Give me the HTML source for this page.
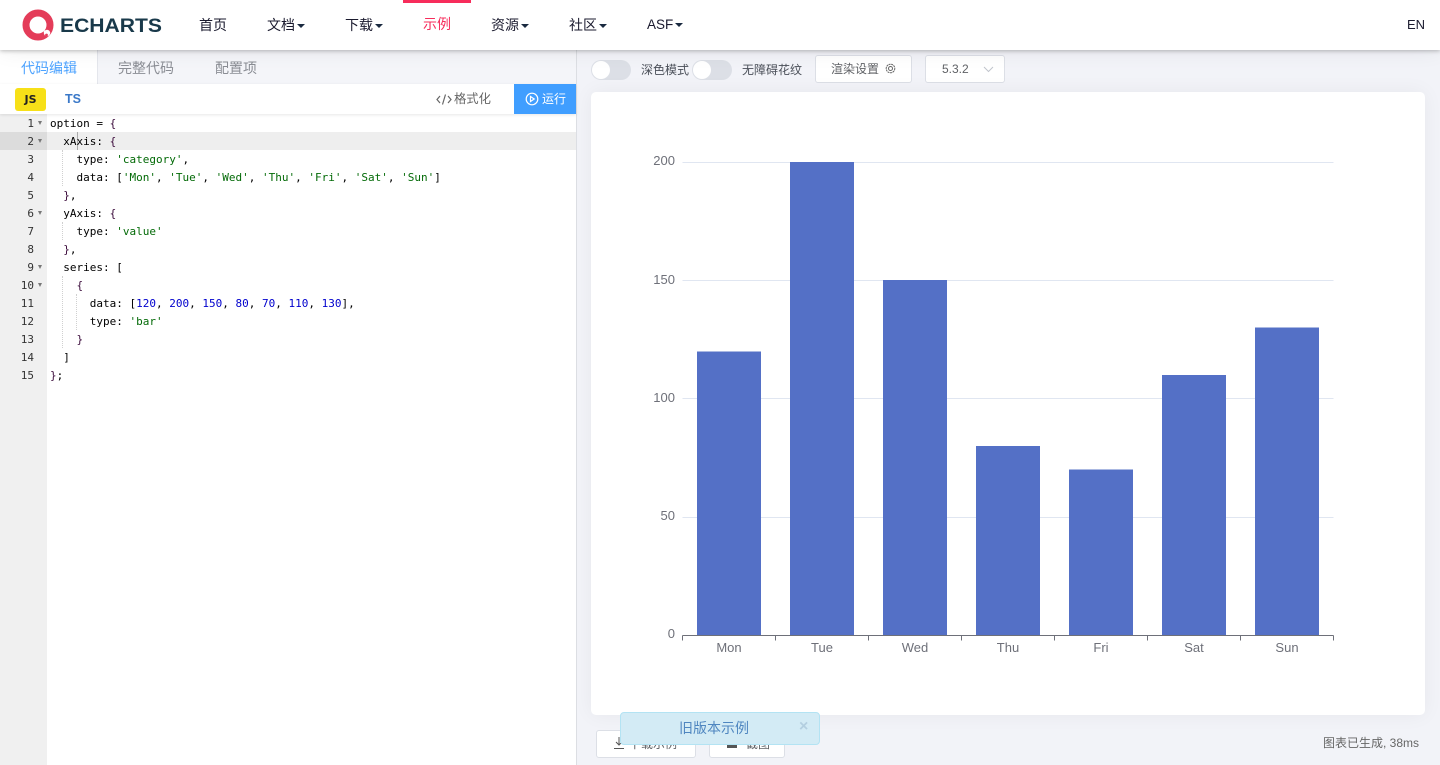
<!DOCTYPE html>
<html lang="zh"><head><meta charset="utf-8"><title>ECharts</title>
<style>
html,body{margin:0;padding:0;width:1440px;height:765px;overflow:hidden;background:#f2f3f8;font-family:"Liberation Sans","Noto Sans CJK SC",sans-serif;}
.a{position:absolute;white-space:nowrap;}
#nav{position:absolute;left:0;top:0;width:1440px;height:50px;background:#fff;box-shadow:0 1px 4px rgba(0,0,0,.25),0 0 22px rgba(0,0,0,.08);z-index:5;}
.n{position:absolute;top:15px;font-size:14px;line-height:20px;color:#1a1a2e;white-space:nowrap;}
.n i{display:inline-block;width:0;height:0;border:4px solid transparent;border-top-color:#1a2a40;border-bottom:0;margin-left:2px;vertical-align:2px;}
#left{position:absolute;left:0;top:50px;width:576px;height:715px;background:#fff;border-right:1px solid #dcdee3;}
#tabs{position:absolute;left:0;top:0;width:576px;height:34px;background:#f4f5f9;}
.t{position:absolute;top:8px;font-size:14px;line-height:20px;color:#8a8d94;}
#bar{position:absolute;left:0;top:34px;width:576px;height:30px;background:#fff;box-shadow:0 1px 3px rgba(0,0,0,.1);z-index:2;}
#gut{position:absolute;left:0;top:64px;width:47px;height:651px;background:#f0f0f0;}
.ln{position:absolute;left:0;width:34px;margin-top:1px;text-align:right;font:11px/18px "DejaVu Sans Mono",monospace;color:#333;}
.c{position:absolute;left:50px;margin-top:1px;font:11px/18px "DejaVu Sans Mono",monospace;color:#000;white-space:pre;}
.c b{font-weight:normal;color:#036a07}.c u{text-decoration:none;color:#0000cd}.c s{text-decoration:none;color:#3a0a3a}
.f{position:absolute;left:38px;width:0;height:0;border:2.5px solid transparent;border-top:4px solid #777;border-bottom:0;}
.g{position:absolute;width:0;border-left:1px dotted #d0d0d0;height:18px;}
.sw{position:absolute;top:60px;width:40px;height:20px;border-radius:10px;background:#dcdfe6;}
.sw:after{content:"";position:absolute;left:1px;top:1px;width:18px;height:18px;border-radius:50%;background:#fff;}
.btn{position:absolute;background:#fff;border:1px solid #dcdfe6;border-radius:3px;box-sizing:border-box;font-size:12px;color:#606266;white-space:nowrap;}
.lbl{position:absolute;top:61px;font-size:12px;line-height:18px;color:#4a4f58;white-space:nowrap;}
#card{position:absolute;left:591px;top:92px;width:834px;height:623px;background:#fff;border-radius:5px;box-shadow:0 0 20px rgba(0,0,0,.05);}
#toast{position:absolute;left:620px;top:712px;width:200px;height:33px;box-sizing:border-box;padding-right:12px;background:#d3ebf5;border:1px solid #b3e3f3;border-radius:4px;text-align:center;font-size:14px;line-height:31px;color:#4f86c0;z-index:6;}
</style></head><body>

<div id="nav">
<svg class="a" style="left:0;top:0" width="175" height="50" viewBox="0 0 175 50">
<circle cx="38" cy="25" r="12" fill="none" stroke="#e43c59" stroke-width="7"/>
<circle cx="47" cy="33" r="3.2" fill="#fff"/>
<path d="M43 30l5 4" stroke="#fff" stroke-width="1.5"/>
<circle cx="50" cy="29" r="1.4" fill="#e43c59"/>
<circle cx="46.5" cy="35" r="1.4" fill="#e43c59"/>
<text x="60" y="32" font-family="Liberation Sans" font-weight="700" font-size="19.5" fill="#19394a" textLength="102" lengthAdjust="spacingAndGlyphs">ECHARTS</text>
</svg>
<div class="a" style="left:403px;top:0;width:68px;height:3px;background:#f72c5b"></div>
<div class="n" style="left:199px">首页</div>
<div class="n" style="left:267px">文档<i></i></div>
<div class="n" style="left:345px">下载<i></i></div>
<div class="n" style="left:423px;color:#f72c5b;top:14px">示例</div>
<div class="n" style="left:491px">资源<i></i></div>
<div class="n" style="left:569px">社区<i></i></div>
<div class="n" style="left:647px;font-size:13.5px">ASF<i></i></div>
<div class="n" style="left:1407px;font-size:13px">EN</div>
</div>

<div id="left">
<div id="tabs">
<div class="a" style="left:0;top:0;width:98px;height:34px;background:#fff;border-right:1px solid #e4e6ec;box-sizing:border-box"></div>
<div class="t" style="left:21px;color:#4da3ff">代码编辑</div>
<div class="t" style="left:118px">完整代码</div>
<div class="t" style="left:215px">配置项</div>
</div>
<div id="bar">
<div class="a" style="left:15px;top:4px;width:31px;height:23px;background:#f7e018;border-radius:3px;text-align:center;font:700 11px/24px 'DejaVu Sans',sans-serif;color:#222">JS</div>
<div class="a" style="left:65px;top:5px;font:700 12.5px/20px 'Liberation Sans',sans-serif;color:#3a78c8">TS</div>
<svg class="a" style="left:436px;top:9px" width="16" height="13" viewBox="0 0 16 13" fill="none" stroke="#666" stroke-width="1.2"><path d="M4 3L1 6.500 4 10M12 3l3 3.500L12 10M9.500 1.500L6.500 11.500"/></svg>
<div class="a" style="left:454px;top:6px;font-size:12.300px;line-height:18px;color:#666">格式化</div>
<div class="a" style="left:514px;top:0;width:62px;height:30px;background:#409eff"></div>
<svg class="a" style="left:525px;top:8px" width="14" height="14" viewBox="0 0 14 14" fill="none" stroke="#fff" stroke-width="1.200"><circle cx="7" cy="7" r="5.800"/><path d="M5.500 4.500L9.200 7 5.500 9.500z"/></svg>
<div class="a" style="left:542px;top:6px;font-size:12px;line-height:18px;color:#fff">运行</div>
</div>
<div id="gut"></div>
<div class="a" style="left:0;top:82px;width:47px;height:18px;background:#dcdcdc"></div>
<div class="a" style="left:47px;top:82px;width:529px;height:18px;background:#eeeeee"></div>
<div class="a" style="left:77px;top:82px;width:1px;height:18px;background:#aaa"></div>

<div class="ln" style="top:64px">1</div><div class="ln" style="top:82px">2</div><div class="ln" style="top:100px">3</div><div class="ln" style="top:118px">4</div><div class="ln" style="top:136px">5</div><div class="ln" style="top:154px">6</div><div class="ln" style="top:172px">7</div><div class="ln" style="top:190px">8</div><div class="ln" style="top:208px">9</div><div class="ln" style="top:226px">10</div><div class="ln" style="top:244px">11</div><div class="ln" style="top:262px">12</div><div class="ln" style="top:280px">13</div><div class="ln" style="top:298px">14</div><div class="ln" style="top:316px">15</div>
<div class="f" style="top:71px"></div><div class="f" style="top:89px"></div><div class="f" style="top:161px"></div><div class="f" style="top:215px"></div><div class="f" style="top:233px"></div>

<div class="g" style="left:62px;top:100px;height:36px"></div>
<div class="g" style="left:62px;top:172px"></div>
<div class="g" style="left:62px;top:226px;height:72px"></div>
<div class="g" style="left:76px;top:244px;height:36px"></div>

<div class="c" style="top:64px">option = <s>{</s></div>
<div class="c" style="top:82px">  xAxis: <s>{</s></div>
<div class="c" style="top:100px">    type: <b>'category'</b>,</div>
<div class="c" style="top:118px">    data: [<b>'Mon'</b>, <b>'Tue'</b>, <b>'Wed'</b>, <b>'Thu'</b>, <b>'Fri'</b>, <b>'Sat'</b>, <b>'Sun'</b>]</div>
<div class="c" style="top:136px">  <s>}</s>,</div>
<div class="c" style="top:154px">  yAxis: <s>{</s></div>
<div class="c" style="top:172px">    type: <b>'value'</b></div>
<div class="c" style="top:190px">  <s>}</s>,</div>
<div class="c" style="top:208px">  series: [</div>
<div class="c" style="top:226px">    <s>{</s></div>
<div class="c" style="top:244px">      data: [<u>120</u>, <u>200</u>, <u>150</u>, <u>80</u>, <u>70</u>, <u>110</u>, <u>130</u>],</div>
<div class="c" style="top:262px">      type: <b>'bar'</b></div>
<div class="c" style="top:280px">    <s>}</s></div>
<div class="c" style="top:298px">  ]</div>
<div class="c" style="top:316px"><s>}</s>;</div>
</div>

<div class="sw" style="left:591px"></div>
<div class="lbl" style="left:641px">深色模式</div>
<div class="sw" style="left:692px"></div>
<div class="lbl" style="left:742px">无障碍花纹</div>
<div class="btn" style="left:815px;top:55px;width:97px;height:28px;line-height:26px;padding-left:15px">渲染设置
<svg style="position:absolute;left:69px;top:7px" width="11" height="11" viewBox="0 0 11 11" fill="none" stroke="#666"><circle cx="5.500" cy="5.500" r="4.300" stroke-dasharray="2 .6"/><circle cx="5.500" cy="5.500" r="2"/></svg></div>
<div class="btn" style="left:925px;top:55px;width:80px;height:28px;line-height:26px;padding-left:16px">5.3.2
<svg style="position:absolute;left:57px;top:10px" width="11" height="7" viewBox="0 0 11 7" fill="none" stroke="#c0c4cc"><path d="M1 1l4.500 4.500L10 1"/></svg></div>

<div id="card"></div>
<svg class="a" style="left:0;top:0;z-index:1" width="1440" height="765" viewBox="0 0 1440 765">
<g stroke="#e0e6f1" stroke-width="1"><path d="M682.500 162.500H1333.500M682.500 280.500H1333.500M682.500 398.500H1333.500M682.500 517.500H1333.500"/></g>
<g fill="#5470c6">
<rect x="697" y="351.500" width="64" height="284"/>
<rect x="790" y="162" width="64" height="473.500"/>
<rect x="883" y="280" width="64" height="355.500"/>
<rect x="976" y="446" width="64" height="189.500"/>
<rect x="1069" y="469.500" width="64" height="166"/>
<rect x="1162" y="375" width="64" height="260.500"/>
<rect x="1255" y="327.500" width="64" height="308"/>
</g>
<path d="M682.500 635.500H1333.500M682.500 635.500v5M775.500 635.500v5M868.500 635.500v5M961.500 635.500v5M1054.500 635.500v5M1147.500 635.500v5M1240.500 635.500v5M1333.500 635.500v5" stroke="#6e7079" fill="none"/>
<g font-family="Liberation Sans,sans-serif" font-size="13" fill="#6e7079" text-anchor="end">
<text x="675" y="165">200</text><text x="675" y="284">150</text><text x="675" y="402">100</text><text x="675" y="520">50</text><text x="675" y="638">0</text>
</g>
<g font-family="Liberation Sans,sans-serif" font-size="13" fill="#6e7079" text-anchor="middle">
<text x="729" y="652">Mon</text><text x="822" y="652">Tue</text><text x="915" y="652">Wed</text><text x="1008" y="652">Thu</text><text x="1101" y="652">Fri</text><text x="1194" y="652">Sat</text><text x="1287" y="652">Sun</text>
</g>
</svg>

<div class="btn" style="left:596px;top:730px;width:100px;height:28px;line-height:26px;padding-left:32px">下载示例
<svg style="position:absolute;left:16px;top:5px" width="12" height="14" viewBox="0 0 12 14" fill="none" stroke="#555"><path d="M6 1v8M3 6l3 3 3-3M1 12.500h10"/></svg></div>
<div class="btn" style="left:709px;top:730px;width:76px;height:28px;line-height:26px;padding-left:36px">截图
<svg style="position:absolute;left:16px;top:6px" width="12" height="12" viewBox="0 0 12 12"><path d="M1 2h3l1-1h2l1 1h3v9H1z" fill="#555"/></svg></div>
<div class="a" style="left:1323px;top:735px;font-size:12px;line-height:16px;color:#666">图表已生成, 38ms</div>

<div id="toast">旧版本示例<span style="position:absolute;left:178px;top:-2px;font-size:16px;font-weight:700;color:#b4cfe0">×</span></div>
</body></html>
